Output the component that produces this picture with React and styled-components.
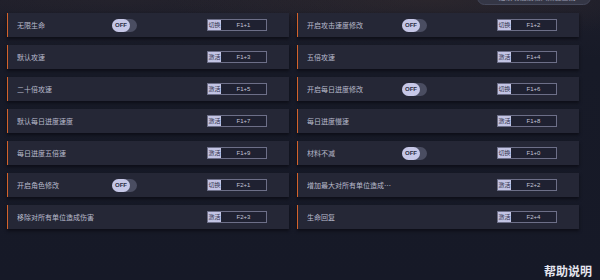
import React from "react";
import styled, { createGlobalStyle } from "styled-components";

const Global = createGlobalStyle`
  html, body { margin: 0; padding: 0; background: #171a27; }
  body { font-family: "Noto Sans CJK SC", "Noto Sans", sans-serif; }
`;

const Page = styled.div`
  position: relative;
  width: 600px;
  height: 280px;
  overflow: hidden;
  background:
    radial-gradient(ellipse 260px 40px at 430px 0px, rgba(70, 55, 50, 0.35), transparent),
    radial-gradient(ellipse 300px 30px at 120px 0px, rgba(60, 50, 50, 0.25), transparent),
    linear-gradient(#1c1d2a, #171a27 60px, #161927);
  display: flex;
  flex-direction: column;
  justify-content: space-between;
`;

const TopPill = styled.div`
  position: absolute;
  top: -10px;
  left: 477px;
  width: 114px;
  height: 15px;
  border-radius: 8px;
  background: #343645;
  border: 1px solid #45485a;
  box-sizing: border-box;
  color: #9a9cb0;
  font-size: 7px;
  line-height: 13px;
  padding-left: 12px;
  white-space: nowrap;
  overflow: hidden;
`;

const Grid = styled.div`
  display: grid;
  grid-template-columns: 282px 282px;
  grid-auto-rows: 24px;
  column-gap: 8px;
  row-gap: 8px;
  padding: 13px 0 0 7px;
`;

const Card = styled.div`
  display: grid;
  grid-template-columns: 95px 95px 60px;
  align-items: center;
  padding-left: 9px;
  background: #252736;
  border-left: 1.5px solid #d3622b;
  box-shadow: 0 2px 3px rgba(8, 9, 16, 0.7);
  box-sizing: border-box;
`;

const Label = styled.div`
  grid-column: 1 / ${(p) => (p.$wide ? 3 : 2)};
  max-width: 88px;
  color: #b9bbcc;
  font-size: 7px;
  line-height: 10px;
  white-space: nowrap;
  overflow: hidden;
  text-overflow: ellipsis;
`;

const Toggle = styled.div`
  grid-column: 2;
  width: 25px;
  height: 13px;
  border-radius: 7px;
  background: #4a4d61;
  display: flex;
  align-items: center;
`;

const Knob = styled.div`
  width: 18px;
  height: 13px;
  border-radius: 7px;
  background: #c6c7e7;
  color: #2a2c42;
  font-family: "Liberation Sans", Arial, sans-serif;
  font-size: 6px;
  font-weight: 700;
  display: flex;
  align-items: center;
  justify-content: center;
`;

const Key = styled.div`
  grid-column: 3;
  display: flex;
  width: 60px;
  height: 12px;
  border: 1px solid #6d6f88;
  box-sizing: border-box;
  background: #1f2131;
`;

const KeyTag = styled.div`
  width: 13px;
  background: #c3c4e4;
  color: #2d2f48;
  font-size: 6px;
  line-height: 10px;
  text-align: center;
  white-space: nowrap;
  overflow: hidden;
`;

const KeyText = styled.div`
  flex: 1;
  color: #c4c6d8;
  font-family: "Liberation Sans", Arial, sans-serif;
  font-size: 6px;
  line-height: 10px;
  text-align: center;
`;

const Footer = styled.div`
  display: flex;
  justify-content: flex-end;
  padding: 0 8px 1px 0;
`;

const Help = styled.div`
  color: #e4e5ee;
  font-size: 12px;
  font-weight: 700;
  line-height: 16px;
`;

const items = [
  { label: "无限生命", toggle: true, key: "F1+1" },
  { label: "开启攻击速度修改", toggle: true, key: "F1+2" },
  { label: "默认攻速", key: "F1+3" },
  { label: "五倍攻速", key: "F1+4" },
  { label: "二十倍攻速", key: "F1+5" },
  { label: "开启每日进度修改", toggle: true, key: "F1+6" },
  { label: "默认每日进度速度", key: "F1+7" },
  { label: "每日进度慢速", key: "F1+8" },
  { label: "每日进度五倍速", key: "F1+9" },
  { label: "材料不减", toggle: true, key: "F1+0" },
  { label: "开启角色修改", toggle: true, key: "F2+1" },
  { label: "增加最大对所有单位造成伤害", key: "F2+2" },
  { label: "移除对所有单位造成伤害", key: "F2+3" },
  { label: "生命回复", key: "F2+4" },
];

export default function App() {
  return (
    <Page>
      <Global />
      <TopPill>· 搜索功能或输入热键查找</TopPill>
      <Grid>
        {items.map((it) => (
          <Card key={it.key}>
            <Label $wide={!it.toggle}>{it.label}</Label>
            {it.toggle && (
              <Toggle>
                <Knob>OFF</Knob>
              </Toggle>
            )}
            <Key>
              <KeyTag>{it.toggle ? "切换" : "激活"}</KeyTag>
              <KeyText>{it.key}</KeyText>
            </Key>
          </Card>
        ))}
      </Grid>
      <Footer>
        <Help>帮助说明</Help>
      </Footer>
    </Page>
  );
}
